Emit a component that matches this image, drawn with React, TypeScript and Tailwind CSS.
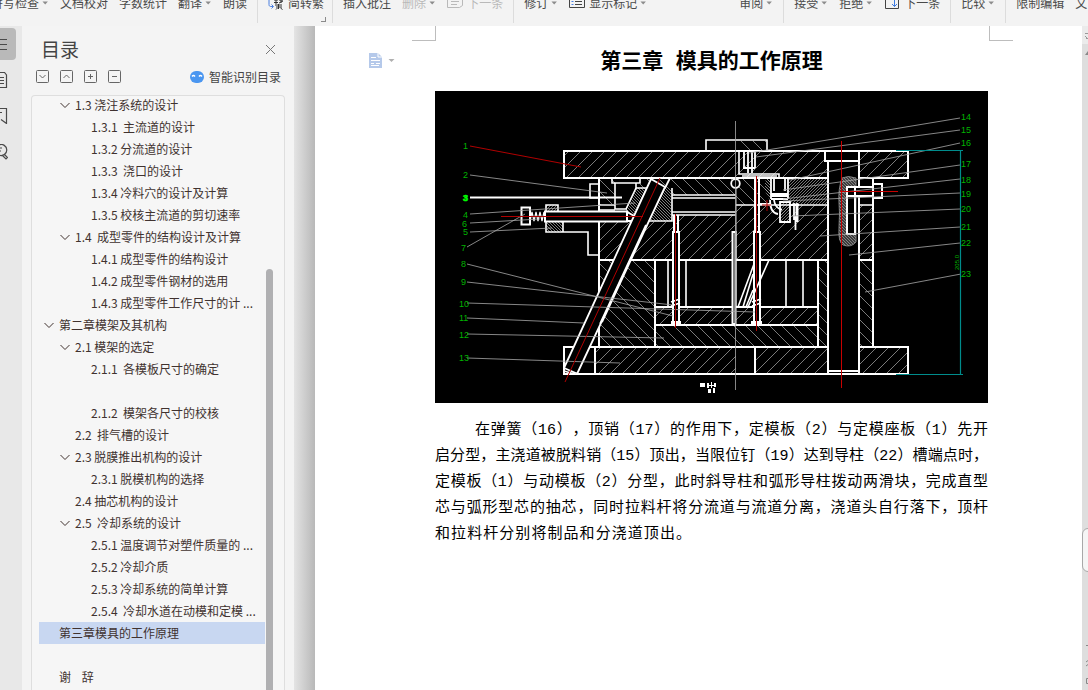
import type { ReactNode } from "react";
import clsx from "clsx";

const Caret = () => (
  <svg className="ml-[3px] h-[7px] w-[7px] shrink-0" viewBox="0 0 7 7">
    <path d="M0.5 1.5h5.4L3.2 4.6z" fill="#8c8c8c" />
  </svg>
);

const Tool = ({
  label,
  icon,
  caret,
  muted,
  className,
}: {
  label: string;
  icon?: ReactNode;
  caret?: boolean;
  muted?: boolean;
  className?: string;
}) => (
  <button
    type="button"
    className={clsx(
      "flex shrink-0 items-center whitespace-nowrap",
      muted ? "text-[#b9b9b9]" : "text-[#4a4a4a]",
      className
    )}
  >
    {icon && <span className="mr-1 flex">{icon}</span>}
    {label}
    {caret && <Caret />}
  </button>
);

const ToolGroup = ({ children, className }: { children: ReactNode; className?: string }) => (
  <div className={clsx("flex h-7 shrink-0 gap-[11px] px-[10px]", className)}>{children}</div>
);

const ConvertIcon = () => (
  <svg className="h-4 w-4" viewBox="0 0 16 16" fill="none">
    <path d="M1 5v4.5c0 1.500.8 2 2 2h2M3.500 9.500l2 2-2 2" stroke="#4a7fe0" />
    <path
      d="M6 5h4M6 7.500h4M8 4v5M11 5h4M13 4v4M11 8l4-2M7 10h7M8 12h6M10.500 9v5M8 14.500l1.500-1.500M14.500 14.500L12.500 13"
      stroke="#333"
    />
  </svg>
);

const NoteIcon = ({ color }: { color: string }) => (
  <svg className="h-4 w-4" viewBox="0 0 16 16" fill="none" stroke={color}>
    <path d="M0.500 2.500h15v8l-3 2h-12zM4 6.500h8M4 9.500h6" />
  </svg>
);

const MarkupIcon = () => (
  <svg className="h-4 w-4" viewBox="0 0 16 16" fill="none" stroke="#444">
    <path d="M0.500 2.500h15v10h-15zM6 6.500h7M6 9.500h7" />
    <path d="M2.500 6.500h2M2.500 9.500h2" stroke="#4a7fe0" />
  </svg>
);

const NextIcon = () => (
  <svg className="h-4 w-4" viewBox="0 0 16 16" fill="none" stroke="#444">
    <path d="M1.500 2.500h13v11h-13z" />
    <path d="M10.500 4v7.500M8 9l2.500 2.500L13 9" stroke="#3f7be0" />
  </svg>
);

const Toolbar = () => (
  <header className="h-[26px] shrink-0 overflow-hidden bg-[#f3f3f3] text-xs leading-4 shadow-[0_1px_3px_rgba(0,0,0,0.16)]">
    <div className="-mt-[5px] flex [&_button]:h-4">
      <ToolGroup className="-ml-[19px] border-r border-[#dcdcdc]">
        <Tool label="拼写检查" caret />
        <Tool label="文档校对" />
        <Tool label="字数统计" />
        <Tool label="翻译" caret />
        <Tool label="朗读" />
      </ToolGroup>
      <ToolGroup className="border-r border-[#dcdcdc]">
        <Tool label="简转繁" icon={<ConvertIcon />} />
        <span className="-mr-1 -ml-[14px] mt-[22px] h-[5px] w-[5px] shrink-0 border-r border-b border-[#8a8a8a]" />
      </ToolGroup>
      <ToolGroup className="border-r border-[#dcdcdc]">
        <Tool label="插入批注" />
        <Tool label="删除" caret muted />
        <Tool label="下一条" icon={<NoteIcon color="#b9b9b9" />} muted />
      </ToolGroup>
      <ToolGroup>
        <Tool label="修订" caret />
        <Tool label="显示标记" icon={<MarkupIcon />} caret />
      </ToolGroup>
      <ToolGroup className="ml-[72px] border-r border-[#dcdcdc]">
        <Tool label="审阅" caret />
      </ToolGroup>
      <ToolGroup className="border-r border-[#dcdcdc]">
        <Tool label="接受" caret />
        <Tool label="拒绝" caret />
        <Tool label="下一条" icon={<NextIcon />} />
      </ToolGroup>
      <ToolGroup className="border-r border-[#dcdcdc]">
        <Tool label="比较" caret />
      </ToolGroup>
      <ToolGroup>
        <Tool label="限制编辑" />
        <Tool label="文" />
      </ToolGroup>
    </div>
  </header>
);

const railIcons = [
  { name: "目录", path: "M-6 3.500H7M-6 8.500H7M-6 13.500H7" },
  { name: "章节", path: "M-6 .5H4.500L6.500 3V15.500H-6M0 5.500H4M0 8.500H4M0 11.500H4" },
  { name: "书签", path: "M-6 .5H6.500V15.500L1 11.500M-2 4.500H2" },
  { name: "查找", path: "M-1 1a5.500 5.500 0 1 1 0 10M-1 4h3M-1 7h2M4 10l3.500 3.500-1.500 1.500L2.500 11.500" },
];

const Rail = () => (
  <nav className="flex w-[22px] shrink-0 flex-col gap-1 bg-[#e8e8e8] pt-0.5">
    {railIcons.map((icon, i) => (
      <button
        key={icon.name}
        type="button"
        aria-label={icon.name}
        className={clsx("flex h-8 w-4 items-center rounded-r", i === 0 && "bg-[#b9b9b9]")}
      >
        <svg className="h-4 w-2" viewBox="0 0 8 16" fill="none" stroke="#4a4a4a" strokeWidth="1.2">
          <path d={icon.path} />
        </svg>
      </button>
    ))}
  </nav>
);

const outline: { text: string; level: 1 | 2 | 3; open?: boolean; active?: boolean }[] = [
  { text: "1.3 浇注系统的设计", level: 2, open: true },
  { text: "1.3.1  主流道的设计", level: 3 },
  { text: "1.3.2 分流道的设计", level: 3 },
  { text: "1.3.3  浇口的设计", level: 3 },
  { text: "1.3.4 冷料穴的设计及计算", level: 3 },
  { text: "1.3.5 校核主流道的剪切速率", level: 3 },
  { text: "1.4  成型零件的结构设计及计算", level: 2, open: true },
  { text: "1.4.1 成型零件的结构设计", level: 3 },
  { text: "1.4.2 成型零件钢材的选用", level: 3 },
  { text: "1.4.3 成型零件工作尺寸的计 ...", level: 3 },
  { text: "第二章模架及其机构", level: 1, open: true },
  { text: "2.1 模架的选定", level: 2, open: true },
  { text: "2.1.1  各模板尺寸的确定", level: 3 },
  { text: "", level: 3 },
  { text: "2.1.2  模架各尺寸的校核", level: 3 },
  { text: "2.2  排气槽的设计", level: 2 },
  { text: "2.3 脱膜推出机构的设计", level: 2, open: true },
  { text: "2.3.1 脱模机构的选择", level: 3 },
  { text: "2.4 抽芯机构的设计", level: 2 },
  { text: "2.5  冷却系统的设计", level: 2, open: true },
  { text: "2.5.1 温度调节对塑件质量的 ...", level: 3 },
  { text: "2.5.2 冷却介质", level: 3 },
  { text: "2.5.3 冷却系统的简单计算", level: 3 },
  { text: "2.5.4  冷却水道在动模和定模 ...", level: 3 },
  { text: "第三章模具的工作原理", level: 1, active: true },
  { text: "", level: 1 },
  { text: "谢    辞", level: 1 },
];

const indent = { 1: "pl-1", 2: "pl-5", 3: "pl-9" };

const treeButtons = [
  { name: "展开", path: "M3.500 5l3 3 3-3" },
  { name: "收起", path: "M3.500 8l3-3 3 3" },
  { name: "增加级别", path: "M4 6.500h5M6.500 4v5" },
  { name: "减少级别", path: "M4 6.500h5" },
];

const OutlinePanel = () => (
  <aside className="flex w-[272px] shrink-0 flex-col bg-[#f4f4f4] px-[9px]">
    <div className="flex h-11 items-center justify-between pt-[2px] pr-[9px] pl-[10px]">
      <h2 className="text-[19px] leading-6 text-[#444]">目录</h2>
      <button type="button" aria-label="关闭">
        <svg className="h-[11px] w-[11px]" viewBox="0 0 11 11" stroke="#777">
          <path d="M1 1l9 9M10 1l-9 9" />
        </svg>
      </button>
    </div>
    <div className="flex h-[25px] items-start justify-between pr-1 pl-[5px]">
      <div className="flex gap-[11px]">
        {treeButtons.map((b) => (
          <button key={b.name} type="button" aria-label={b.name}>
            <svg className="h-[13px] w-[13px]" viewBox="0 0 13 13" fill="none" stroke="#666">
              <rect x="0.5" y="0.5" width="12" height="12" rx="1" />
              <path d={b.path} />
            </svg>
          </button>
        ))}
      </div>
      <button type="button" className="flex items-center gap-[5px] text-xs leading-[14px] text-[#444]">
        <svg className="h-[14px] w-[14px]" viewBox="0 0 14 14">
          <rect y="1" width="14" height="12" rx="6" fill="#4a96f0" />
          <path d="M2 6.500q1.500-2 3 0M9 6.500q1.500-2 3 0" fill="none" stroke="#fff" strokeWidth="1.3" />
        </svg>
        智能识别目录
      </button>
    </div>
    <div className="flex min-h-0 flex-1 justify-between overflow-hidden rounded-t border border-b-0 border-[#dedede] bg-[#f6f6f6] pl-[7px] pr-[11px]">
      <ul className="-mt-0.5 w-[226px] shrink-0 text-xs leading-[22px] text-[#40322f]">
        {outline.map((item, i) => (
          <li key={i} className={clsx("flex h-[22px]", indent[item.level], item.active && "bg-[#c8d7f1]")}>
            <span className="flex w-4 shrink-0 items-center">
              {item.open && (
                <svg className="h-3 w-3" viewBox="0 0 12 12" fill="none" stroke="#40322f">
                  <path d="M1.500 4L6 8.500 10.500 4" />
                </svg>
              )}
            </span>
            {item.text && (
              <a href="#" className="whitespace-pre">
                {item.text}
              </a>
            )}
          </li>
        ))}
      </ul>
      <div className="mt-[173px] w-[7px] shrink-0 rounded-t bg-[#b0b0b2]" />
    </div>
  </aside>
);

const leaders = [
  [470, 175, 607, 193],
  [470, 214, 635, 203],
  [470, 223, 540, 219],
  [470, 232, 552, 228],
  [467, 247, 525, 214],
  [467, 264, 673, 316],
  [467, 282, 673, 305],
  [467, 303, 755, 312],
  [467, 318, 584, 323],
  [467, 334, 664, 338],
  [467, 358, 620, 363],
  [960, 118, 749, 153],
  [960, 130, 756, 157],
  [960, 143, 790, 180],
  [960, 165, 783, 190],
  [960, 179, 783, 199],
  [960, 193, 783, 201],
  [960, 209, 792, 216],
  [960, 227, 820, 236],
  [960, 243, 849, 255],
  [961, 274, 865, 292],
];

const callouts: [string, number, number][] = [
  ["1", 463, 149],
  ["2", 463, 178],
  ["4", 463, 218],
  ["6", 462, 227],
  ["5", 463, 235],
  ["7", 461, 251],
  ["8", 461, 267],
  ["9", 461, 285],
  ["10", 459, 307],
  ["11", 459, 321],
  ["12", 459, 338],
  ["13", 459, 361],
  ["14", 961, 120],
  ["15", 961, 133],
  ["16", 961, 146],
  ["17", 961, 167],
  ["18", 961, 183],
  ["19", 961, 197],
  ["20", 961, 212],
  ["21", 961, 230],
  ["22", 961, 246],
  ["23", 961, 277],
];

const MoldDrawing = () => (
  <svg className="block w-full bg-black" viewBox="435 91 553 312" role="img" aria-label="模具装配图">
    <defs>
      <pattern id="up" width="12" height="12" patternUnits="userSpaceOnUse">
        <path d="M-1 13L13 -1M-1 1L1 -1M11 13L13 11" stroke="#9a9a9a" strokeWidth="0.8" />
      </pattern>
      <pattern id="down" width="12" height="12" patternUnits="userSpaceOnUse">
        <path d="M-1 -1L13 13M11 -1L13 1M-1 11L1 13" stroke="#9a9a9a" strokeWidth="0.8" />
      </pattern>
      <pattern id="dense" width="3" height="3" patternUnits="userSpaceOnUse">
        <path d="M-1 4L4 -1M-1 1L1 -1M2 4L4 2" stroke="#a8a8a8" strokeWidth="0.7" />
      </pattern>
      <pattern id="denseDown" width="3" height="3" patternUnits="userSpaceOnUse">
        <path d="M-1 -1L4 4M2 -1L4 1M-1 2L1 4" stroke="#b4b4b4" strokeWidth="0.7" />
      </pattern>
    </defs>

    {/* hatching */}
    <g fill="url(#up)">
      <path d="M564 151H908V178H564z" />
      <path d="M599 222H672V215H736V205H828V260H599z" />
      <path d="M859 205H873V260H859z" />
      <path d="M655 307H818V325H655z" />
      <path d="M595 347H736V374H595zM755 347H828V374H755zM859 347H908V374H859z" />
    </g>
    <g fill="url(#down)">
      <path d="M599 178H615V205H599zM640 178H735V195H671V188H640zM736 178H771V205H736z" />
      <path d="M599 260H655V347H599zM655 325H818V347H655zM818 260H828V347H818zM859 260H873V347H859z" />
      <path d="M739 141H766V151H739z" />
    </g>
    <g fill="url(#dense)">
      <path d="M789 178H828V204H789zM780 202H790V222H780z" />
      <path d="M546 205H558V211H546z" />
    </g>
    <path d="M636 188H648L634 221L626 209zM664 188H671V221H649zM546 222H563V232H546z" fill="url(#denseDown)" />
    <path d="M766 178q-4 13 5 24v-24z" fill="url(#denseDown)" />

    {/* plates */}
    <g fill="none" stroke="#fff" strokeWidth="2">
      <path d="M564 151H908V178H564zM564 347H908V374H564z" />
      <path d="M599 178V347M873 178V347M599 260H873M655 260V347M818 260V347" />
      <path d="M655 307H818M655 325H818M595 347V374M755 347V374" />
    </g>
    <g fill="none" stroke="#fff" strokeWidth="1.600">
      <path d="M706 151V140H767V151M739 150V174H779V178M742 176H777" />
      <path d="M668 260V307M686 260V307M786 260V307M803 260V307" />
      <path d="M612 178V183H640V178M615 183V209H627M636 183V188M590 184H599V198H590z" />
      <path d="M599 205H615M599 210H615M672 195H736M672 198H736M672 212H736M672 215H736M672 188V221H649" />
      <path d="M736 205H828M859 205H873M636 188H648M636 188L626 209" />
      <path d="M563 232H588V255H599M546 211V205H558V211M546 222V232H563V222" />
    </g>
    <path d="M736 178V306" stroke="#ccc" strokeWidth="1" />

    {/* core pulling screw */}
    <g stroke="#fff" strokeWidth="2" fill="#000">
      <path d="M545 211.500H627V221.500H545z" />
      <path d="M521.500 207.500H530V224.500H521.500zM627 212L636 217L633 221H627z" />
      <path d="M530 221l2-9 2 9 2-9 2 9 2-9 2 9 2-9" fill="none" strokeWidth="1.200" />
    </g>
    <path d="M470 197.500H622" stroke="#fff" strokeWidth="2" />

    {/* angle pin */}
    <path d="M651 179L665 187L577 374L564 368z" fill="#000" />
    <path
      d="M651 179L665 187M651 179L564 368M665 187L577 374M564 368L578 374M564 371L574 374M670 178L665 188M649 221L602 322M646 225L600 324"
      stroke="#fff"
      strokeWidth="1.800"
      fill="none"
    />

    {/* ejector pins */}
    <g stroke="#fff" strokeWidth="2" fill="#000">
      <path d="M673 232H679V324H673zM674 215V232M678 215V232M672 322H680V325H672z" />
      <path d="M754 232H760V324H754zM755 178V232M759 178V232M752 322H761V325H752z" />
      <path d="M732.500 232H735.500V324H732.500z" />
      <path
        d="M671 302l9-3M671 306l9-3M752 302l9-3M752 306l9-3M769 260L748 307M754 264L738 307M753 274L743 307M753 290L746 307"
        strokeWidth="1.600"
      />
    </g>

    {/* stripper, spring and limit screws */}
    <g stroke="#fff" strokeWidth="1.800" fill="none">
      <path d="M744 151V168M748 151V173M752 151V173M755 151V168M742 151H756M743 168H755" />
      <path d="M771 178V199M774 179V191M785 179V191M788 178V199M771 194H788M771 196H788M771 199H788M770 200q0 13 8 14M774 200q1 8 8 10M760 204H771" />
      <path d="M780 202H790V222H780zM794 203V220M797 203V220M791 205H799M795.500 216V230" />
      <path d="M797 206V222" strokeWidth="3" />
      <circle cx="735.500" cy="183.500" r="4.300" fill="#000" />
    </g>

    {/* guide pillar */}
    <g stroke="#fff" strokeWidth="2" fill="#000">
      <path d="M828 161H859V374H828z" />
      <path d="M825 151H859V161H825zM828 371H859" />
    </g>
    <path
      d="M842 178q6-3 14 0v64q-5 6-13 3q-5-3-4-18t0-24q-1-14 3-25z"
      fill="url(#denseDown)"
      stroke="#999"
      strokeWidth="0.800"
    />
    <path d="M842 178q6-3 14 0v64q-5 6-13 3q-5-3-4-18t0-24q-1-14 3-25z" fill="#888" fillOpacity="0.450" />
    <g stroke="#fff" strokeWidth="2" fill="#000">
      <path d="M847 187H855V234H847zM847 187H873V196H847zM873 184H882V198H873z" />
    </g>

    <g stroke="#a8a8a8" strokeWidth="0.800">
      {leaders.map(([x1, y1, x2, y2]) => (
        <line key={`${x1}-${y1}`} x1={x1} y1={y1} x2={x2} y2={y2} />
      ))}
      <path d="M735.500 121V390" />
    </g>
    <g stroke="#b00000" strokeWidth="1" fill="none">
      <path d="M470 146L581 167M501 216.500H643M660 178L565 382M675.500 214V328M756.500 176V331M762 205H771M767 200V211" />
      <path d="M841.500 141V388M840 191.500H898" stroke="#c80000" />
    </g>
    <path d="M896 150.500H963M896 374.500H963M960.500 151V374" stroke="#008c8c" strokeWidth="1.200" />

    <g fill="#00b400" fontFamily="Liberation Sans, sans-serif" fontSize="9">
      {callouts.map(([label, x, y]) => (
        <text key={label} x={x} y={y}>
          {label}
        </text>
      ))}
      <text x="463" y="201" fill="#00ff00" stroke="#00ff00" strokeWidth="0.600" fontWeight="bold">
        3
      </text>
      <text transform="translate(959 270) rotate(-90)" fontSize="6">
        205.0
      </text>
    </g>
    <path
      d="M700 383h5v4h-5zM707 383h2v5h-2zM711 382h1v6h-1zM714 383h2v4h-2zM708 389h3v4h-3zM713 388h2v5h-2zM709 385h6v1h-6z"
      fill="#fff"
    />
  </svg>
);

const lines = [
  "启分型，主浇道被脱料销（15）顶出，当限位钉（19）达到导柱（22）槽端点时，",
  "定模板（1）与动模板（2）分型，此时斜导柱和弧形导柱拨动两滑块，完成直型",
  "芯与弧形型芯的抽芯，同时拉料杆将分流道与流道分离，浇道头自行落下，顶杆",
];

const DocumentPage = () => (
  <article className="min-w-0 flex-1 overflow-hidden bg-white text-black">
    <div className="flex h-[15px] justify-between pr-[69px] pl-[97px]">
      <span className="w-6 border-r border-b border-[#bdbdbd]" />
      <span className="w-6 border-b border-l border-[#bdbdbd]" />
    </div>
    <div className="flex h-[50px] pt-[3px] pr-[94px]">
      <button type="button" aria-label="段落布局" className="flex h-8 w-[120px] shrink-0 items-center pl-[54px]">
        <svg className="h-[15px] w-[26px]" viewBox="0 0 26 15">
          <path d="M0 0h9l4 4v11H0z" fill="#b5c9ea" />
          <path d="M9 0v4h4M2 4.500h5M2 7.500h9M2 10.500h3M7 10.500h4M2 12.500h8" stroke="#fff" fill="none" />
          <path d="M19.500 6h6l-3 3z" fill="#b0b0b0" />
        </svg>
      </button>
      <h1 className="flex-1 text-center font-['Liberation_Mono','Noto_Sans_CJK_SC',monospace] text-[21px] leading-[38px] font-bold">
        第三章 模具的工作原理
      </h1>
    </div>
    <div className="pr-[94px] pl-[120px]">
      <MoldDrawing />
      <p className="mt-[15px] font-['Liberation_Mono','Noto_Sans_CJK_SC',monospace] text-[15px] leading-[26px] whitespace-nowrap [text-align-last:justify] [text-spacing-trim:space-all]">
        <span className="block pl-10">
          在弹簧（16），顶销（17）的作用下，定模板（2）与定模座板（1）先开
        </span>
        {lines.map((line) => (
          <span key={line} className="block">
            {line}
          </span>
        ))}
        <span className="block w-64">和拉料杆分别将制品和分浇道顶出。</span>
      </p>
    </div>
  </article>
);

const ScrollTrack = () => (
  <div className="flex w-1.5 shrink-0 flex-col overflow-hidden bg-[#dedede]">
    <svg className="h-8 w-1.5 shrink-0" viewBox="0 0 6 32">
      <path d="M0 0h6v18H0z" fill="#ebebeb" />
      <path d="M3 7.500h3M4 12.500h2M3 10l3 3" stroke="#999" />
      <path d="M6 25v4H3z" fill="#888" />
    </svg>
    <div className="mt-[470px] h-11 w-3 shrink-0 rounded-l-md border border-[#a8a8a8] bg-[#f5f5f5]" />
    <svg className="mt-auto h-12 w-1.5 shrink-0" viewBox="0 0 6 48" fill="none" stroke="#888">
      <path d="M4 3.500h2M4 20l2-1.500M4 24l2-1.500M6 36.500H4.500v5H6" />
    </svg>
  </div>
);

export default function App() {
  return (
    <div className="flex h-screen flex-col overflow-hidden bg-[#f3f3f3] font-['Noto_Sans_CJK_SC',sans-serif]">
      <Toolbar />
      <div className="flex min-h-0 flex-1">
        <Rail />
        <OutlinePanel />
        <main className="flex min-w-0 flex-1">
          <div className="w-[21px] shrink-0 bg-linear-to-r from-[#e4e4e4] to-[#b8b8b8]" />
          <DocumentPage />
          <ScrollTrack />
        </main>
      </div>
    </div>
  );
}
